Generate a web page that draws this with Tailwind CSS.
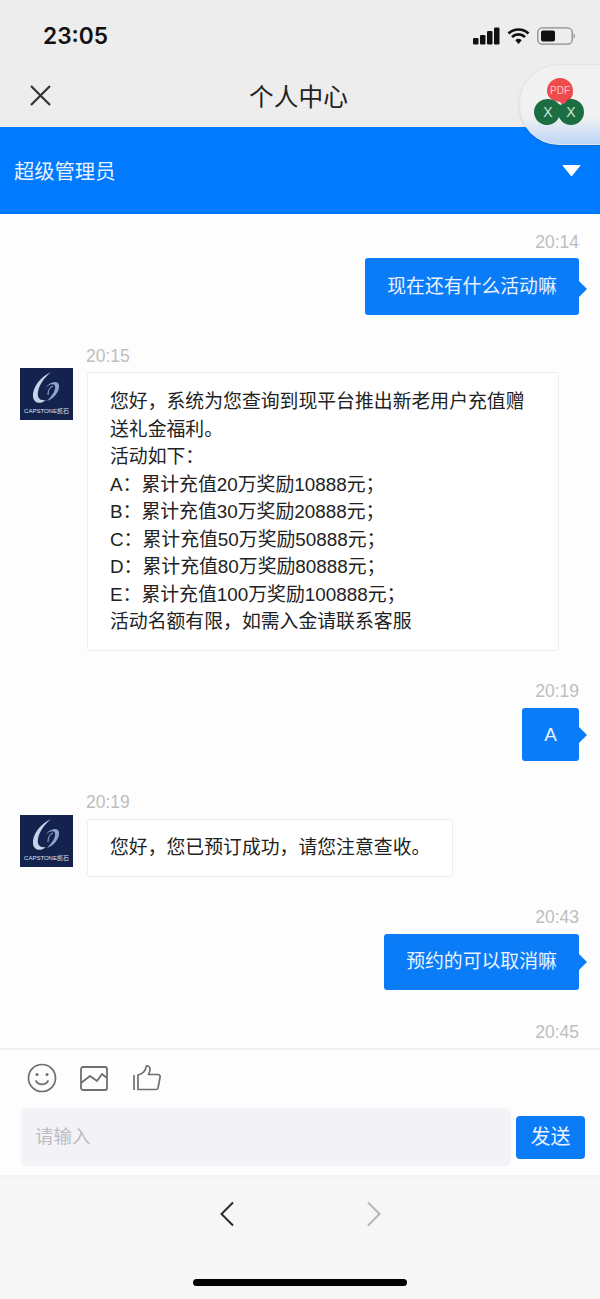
<!DOCTYPE html>
<html lang="zh"><head><meta charset="utf-8"><script src="https://cdn.jsdelivr.net/npm/@tailwindcss/browser@4"></script></head>
<body class="m-0">
<div class="relative w-[600px] h-[1299px] overflow-hidden flex flex-col bg-[#fdfdfd] font-['Liberation_Sans','Noto_Sans_CJK_SC',sans-serif] text-[#222]">
  <!-- status bar -->
  <header class="h-[127px] shrink-0 bg-[#ededed] flex flex-col">
    <div class="h-[72px] flex items-center justify-between pl-[43px] pr-[25px]">
      <span class="font-['Inter',sans-serif] font-semibold text-[22.700px] leading-none text-[#111]">23:05</span>
      <div class="flex items-center gap-[7px]">
        <svg width="27" height="18" viewBox="0 0 27 18"><rect x="0" y="11" width="5.500" height="6.500" rx="1.200" fill="#111"/><rect x="7" y="8" width="5.500" height="9.500" rx="1.200" fill="#111"/><rect x="14" y="4" width="5.500" height="13.500" rx="1.200" fill="#111"/><rect x="21" y="0.500" width="5.500" height="17" rx="1.200" fill="#111"/></svg>
        <svg width="23" height="18" viewBox="0 0 23 18"><path d="M1.500 6.500a14.500 14.500 0 0 1 20 0M5 10a9.500 9.500 0 0 1 13 0" fill="none" stroke="#111" stroke-width="2.700"/><path d="M8.300 13.200a4.800 4.800 0 0 1 6.400 0L11.500 17z" fill="#111"/></svg>
        <svg width="38" height="18" viewBox="0 0 38 18"><rect x="0.800" y="0.800" width="34.400" height="16.400" rx="4.500" fill="none" stroke="#8a8a8a" stroke-width="1.300"/><rect x="4" y="3.500" width="14" height="11" rx="2" fill="#111"/><path d="M36.500 6.500c1 .4 1.500 1.300 1.500 2.500s-.5 2.100-1.500 2.500z" fill="#999"/></svg>
      </div>
    </div>
    <div class="relative h-[55px] flex items-start justify-center">
      <svg class="absolute left-[29px] top-[12px]" width="23" height="23" viewBox="0 0 23 23"><path d="M2 2l19 19M21 2L2 21" stroke="#333" stroke-width="2.200" fill="none"/></svg>
      <h1 class="text-[24.700px] font-normal leading-[46px] text-[#222] -ml-[3px] font-['Noto_Sans_CJK_SC',sans-serif]">个人中心</h1>
    </div>
  </header>

  <!-- role bar -->
  <div class="h-[87px] shrink-0 bg-[#007aff] flex items-center justify-between pl-[14px] pr-[19px]">
    <span class="text-[20.300px] leading-none text-[#e8f2ff] font-['Noto_Sans_CJK_SC',sans-serif]">超级管理员</span>
    <svg width="19" height="13" viewBox="0 0 19 13"><path d="M1 1.500h17L9.500 12z" fill="#fff" stroke="#fff" stroke-linejoin="round"/></svg>
  </div>

  <!-- chat -->
  <main class="flex-1 min-h-0 overflow-hidden pl-[20px] pr-[21px] pt-[18px] flex flex-col text-[18.850px] leading-[27.500px]">
    <div class="flex flex-col items-end">
      <time class="text-[17.500px] leading-5 text-[#bdbdbd] mb-[6px]">20:14</time>
      <div class="relative h-[57px] w-[214px] bg-[#0a7cf7] text-[#eaf3ff] rounded-[3px] flex items-center justify-center">现在还有什么活动嘛<span class="absolute -right-[8px] top-[23px] border-y-[8px] border-l-[8px] border-y-transparent border-l-[#0a7cf7]"></span></div>
    </div>

    <div class="flex mt-[31px]">
      <div class="mt-[22px] mr-[14px] w-[53px] h-[52px] shrink-0 bg-[#14224e] relative">
        <svg class="absolute left-0 top-0" width="53" height="40" viewBox="0 0 53 40"><path d="M31 4C20 9 12 20 13 29c1 6 7 8 13 3-6 1-9-2-8-8 1-7 6-14 13-20z" fill="#c5d3e8"/><path d="M25 20c5-7 13-8 14-3 1 7-6 14-12 16 5-5 9-11 8-15-1-3-6-2-10 2z" fill="#8fa5c9"/><path d="M28 27c0-4 2-8 5-9" fill="none" stroke="#8fa5c9" stroke-width="1.200"/></svg>
        <span class="absolute top-[40px] left-0 right-0 text-center text-[6px] leading-[7px] text-[#dfe6f2] whitespace-nowrap">CAPSTONE凯石</span>
      </div>
      <div class="flex-1">
        <time class="block text-[17.500px] leading-5 text-[#bdbdbd] mb-[6px] -ml-px">20:15</time>
        <div class="relative w-[472px] h-[279px] bg-white border border-[#eeeeee] rounded-[3px] pl-[22px] pr-[28px] pt-[15px]">
          <p>您好，系统为您查询到现平台推出新老用户充值赠送礼金福利。<br>活动如下：<br>A：累计充值20万奖励10888元；<br>B：累计充值30万奖励20888元；<br>C：累计充值50万奖励50888元；<br>D：累计充值80万奖励80888元；<br>E：累计充值100万奖励100888元；<br>活动名额有限，如需入金请联系客服</p>
        </div>
      </div>
    </div>

    <div class="flex flex-col items-end mt-[30px]">
      <time class="text-[17.500px] leading-5 text-[#bdbdbd] mb-[7px]">20:19</time>
      <div class="relative h-[53px] w-[57px] bg-[#0a7cf7] text-[#eaf3ff] rounded-[3px] flex items-center justify-center">A<span class="absolute -right-[8px] top-[19px] border-y-[8px] border-l-[8px] border-y-transparent border-l-[#0a7cf7]"></span></div>
    </div>

    <div class="flex mt-[31px]">
      <div class="mt-[23px] mr-[14px] w-[53px] h-[52px] shrink-0 bg-[#14224e] relative">
        <svg class="absolute left-0 top-0" width="53" height="40" viewBox="0 0 53 40"><path d="M31 4C20 9 12 20 13 29c1 6 7 8 13 3-6 1-9-2-8-8 1-7 6-14 13-20z" fill="#c5d3e8"/><path d="M25 20c5-7 13-8 14-3 1 7-6 14-12 16 5-5 9-11 8-15-1-3-6-2-10 2z" fill="#8fa5c9"/><path d="M28 27c0-4 2-8 5-9" fill="none" stroke="#8fa5c9" stroke-width="1.200"/></svg>
        <span class="absolute top-[40px] left-0 right-0 text-center text-[6px] leading-[7px] text-[#dfe6f2] whitespace-nowrap">CAPSTONE凯石</span>
      </div>
      <div class="flex-1">
        <time class="block text-[17.500px] leading-5 text-[#bdbdbd] mb-[7px] -ml-px">20:19</time>
        <div class="w-[366px] h-[58px] bg-white border border-[#eeeeee] rounded-[3px] pl-[22px] flex items-center">您好，您已预订成功，请您注意查收。</div>
      </div>
    </div>

    <div class="flex flex-col items-end mt-[30px]">
      <time class="text-[17.500px] leading-5 text-[#bdbdbd] mb-[7px]">20:43</time>
      <div class="relative h-[56px] w-[195px] bg-[#0a7cf7] text-[#eaf3ff] rounded-[3px] flex items-center justify-center">预约的可以取消嘛<span class="absolute -right-[8px] top-[20px] border-y-[8px] border-l-[8px] border-y-transparent border-l-[#0a7cf7]"></span></div>
    </div>

    <div class="flex flex-col items-end mt-[32px]">
      <time class="text-[17.500px] leading-5 text-[#bdbdbd]">20:45</time>
    </div>
  </main>

  <!-- composer -->
  <section class="h-[129px] shrink-0 bg-[#fdfdfd] border-y-2 border-[#f2f2f2] flex flex-col">
    <div class="h-[58px] flex items-center pl-[27px] -mt-px">
      <svg class="mr-[23px]" width="30" height="30" viewBox="0 0 30 30" fill="none" stroke="#6f6f6f" stroke-width="1.700"><circle cx="15" cy="15" r="13.500"/><path d="M9 18c2.500 4.500 9.500 4.500 12 0" stroke-linecap="round"/><circle cx="10" cy="11.500" r="1.500" fill="#6f6f6f" stroke="none"/><circle cx="20" cy="11.500" r="1.500" fill="#6f6f6f" stroke="none"/></svg>
      <svg class="mr-[25px]" width="28" height="25" viewBox="0 0 28 25" fill="none" stroke="#6f6f6f" stroke-width="1.800"><rect x="1" y="1" width="26" height="23" rx="2"/><path d="M1 17l9-7 7 5 5-7 5 4" stroke-linejoin="round"/></svg>
      <svg width="28" height="26" viewBox="0 0 28 26" fill="none" stroke="#6f6f6f" stroke-width="1.700"><path d="M1 10v15"/><path d="M5 10c4-1 8-4 8-8 0-2 4-1.500 4 2 0 2-.5 4-1.500 5.500H25c1.500 0 2.500 1.500 2 3l-2 10.500c-.3 1-1 1.500-2 1.500H5z" stroke-linejoin="round"/></svg>
    </div>
    <div class="flex items-center pl-[21px] mt-px">
      <div class="w-[490px] h-[58px] bg-[#f3f3f7] rounded-[6px] pl-[14px] flex items-center text-[18.500px] text-[#bcbcc2]">请输入</div>
      <button class="ml-[5px] w-[69px] h-[43px] bg-[#0a7cf7] text-[#eaf3ff] rounded-[4px] text-[20px]">发送</button>
    </div>
  </section>

  <!-- browser nav -->
  <footer class="relative h-[122px] shrink-0 bg-[#f6f6f6] flex justify-center pt-[24px] gap-[133px]">
    <svg width="14" height="26" viewBox="0 0 14 26" fill="none" stroke="#2a2a2a" stroke-width="2"><path d="M13 1.500L1.500 13 13 24.500"/></svg>
    <svg width="14" height="26" viewBox="0 0 14 26" fill="none" stroke="#b5b5b5" stroke-width="2"><path d="M1 1.500L12.500 13 1 24.500"/></svg>
    <div class="absolute left-[193px] top-[102px] w-[214px] h-[7px] rounded-full bg-black"></div>
  </footer>

  <!-- floating widget -->
  <div class="absolute left-[519px] top-[64px] w-[81px] h-[81px] rounded-l-[40px] bg-gradient-to-b from-[#f1f1f1] from-65% to-[#bcd6f7] border border-[#e4e4e4] border-r-0 shadow-sm">
    <svg class="absolute left-0 -top-px" width="80" height="79" viewBox="0 0 80 79">
      <path d="M40 14a13 13 0 0 1 13 13c0 7-4 11-8 12-1 2-3 2-5-1-5-1-13-3-13-11a13 13 0 0 1 13-13z" fill="#ef4a4c"/>
      <path d="M28 35a13 13 0 0 1 9 3c1 2 3 3 5 3 1 5 0 9-3 12a13 13 0 1 1-11-18z" fill="#1c6e42"/>
      <path d="M51 35a13 13 0 1 1-13 13c0-4 2-6 4-8 2 0 4-1 5-4 1 0 2-1 4-1z" fill="#1c6e42"/>
      <text x="40" y="30" text-anchor="middle" font-size="10" fill="#f8c9c9" font-family="Liberation Sans">PDF</text>
      <text x="28" y="53" text-anchor="middle" font-size="14" fill="#cfe6d8" font-family="Liberation Sans">X</text>
      <text x="51" y="53" text-anchor="middle" font-size="14" fill="#cfe6d8" font-family="Liberation Sans">X</text>
    </svg>
  </div>
</div>
</body></html>
